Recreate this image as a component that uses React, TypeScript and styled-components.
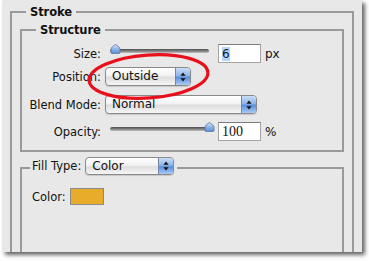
import styled, { createGlobalStyle } from 'styled-components';

const GlobalStyle = createGlobalStyle`
  body {
    margin: 0;
    background: #ffffff;
    font-family: 'DejaVu Sans', 'Liberation Sans', sans-serif;
    color: #111;
  }
`;

const Stage = styled.div`
  position: relative;
  width: 369px;
  height: 261px;
  overflow: hidden;
`;

const Panel = styled.div`
  width: 360px;
  height: 252px;
  margin-left: 2px;
  padding-top: 4px;
  box-sizing: border-box;
  background: #e8e8e8;
  box-shadow: 3px 3px 4px rgba(0, 0, 0, 0.6);
  overflow: hidden;
`;

const Group = styled.fieldset<{ $open?: boolean; $top?: number; $minHeight?: number; $bottom?: number }>`
  margin: ${(p) => p.$top ?? 0}px 8px 0 8px;
  padding: 0 0 ${(p) => p.$bottom ?? 0}px 0;
  min-width: 0;
  min-height: ${(p) => p.$minHeight ?? 0}px;
  border: 2px solid #9a9a9a;
  border-bottom: ${(p) => (p.$open ? 'none' : '2px solid #9a9a9a')};
`;

const Legend = styled.legend<{ $indent: number; $pad?: number }>`
  margin-left: ${(p) => p.$indent}px;
  padding: 0 ${(p) => p.$pad ?? 4}px;
  font-weight: bold;
  font-size: 11.5px;
  letter-spacing: -0.1px;
  line-height: 16px;
  color: #111;
`;

const FillLegend = styled.legend`
  margin-left: 8px;
  padding: 0 3px 3px 2px;
  display: flex;
  align-items: center;
  gap: 4px;
`;

const Row = styled.div<{ $gap: number }>`
  display: grid;
  grid-template-columns: 79px auto;
  column-gap: 4px;
  align-items: center;
  height: 19px;
  margin-top: ${(p) => p.$gap}px;
`;

const Label = styled.span<{ $align?: string }>`
  font-size: 11.5px;
  text-align: ${(p) => p.$align ?? 'right'};
  white-space: nowrap;
`;

const Controls = styled.div`
  display: flex;
  align-items: center;
`;

const SliderWrap = styled.div`
  position: relative;
  width: 104px;
  height: 19px;
  margin-left: 5px;
`;

const Track = styled.div`
  position: absolute;
  left: 0;
  top: 5px;
  width: 99px;
  height: 4px;
  border-radius: 2px;
  background: linear-gradient(#4e4e4e, #8a8a8a 60%, #c4c4c4);
`;

const Thumb = styled.svg`
  position: absolute;
  top: 0;
`;

const NumberBox = styled.div<{ $serif?: boolean }>`
  width: 43px;
  height: 19px;
  box-sizing: border-box;
  margin-left: 4px;
  padding: 1px 3px;
  background: #fff;
  border: 1px solid #a4a4a4;
  border-top-color: #7c7c7c;
  font-family: ${(p) => (p.$serif ? "'Liberation Serif', serif" : "'DejaVu Sans', sans-serif")};
  font-size: ${(p) => (p.$serif ? 14 : 12)}px;
  line-height: 16px;
`;

const Selected = styled.span`
  background: #b5d5ff;
`;

const Unit = styled.span`
  margin-left: 4px;
  font-size: 12px;
`;

const Popup = styled.div<{ $width: number; $height?: number }>`
  display: flex;
  width: ${(p) => p.$width}px;
  height: ${(p) => p.$height ?? 19}px;
  box-sizing: border-box;
  border: 1px solid #8a8a8a;
  border-radius: 4px;
  overflow: hidden;
  background: linear-gradient(#ffffff, #f2f2f2 45%, #dedede 55%, #f6f6f6);
  box-shadow: 0 1px 1px rgba(0, 0, 0, 0.15);
`;

const PopupText = styled.span`
  flex: 1;
  padding-left: 6px;
  font-size: 12px;
  line-height: 17px;
  font-weight: normal;
  color: #111;
`;

const PopupCap = styled.div`
  width: 14px;
  display: flex;
  align-items: center;
  justify-content: center;
  border-left: 1px solid #6f86a8;
  background: linear-gradient(#c9ddf6, #8fb5ea 45%, #5b8fdc 55%, #a9cbf5);
`;

const ColorRow = styled.div`
  display: flex;
  align-items: center;
  gap: 4px;
  margin: 10px 0 0 10px;
`;

const Swatch = styled.div<{ $color: string }>`
  width: 34px;
  height: 17px;
  box-sizing: border-box;
  border: 1px solid #8a8a8a;
  background: ${(p) => p.$color};
`;

const Marker = styled.svg`
  position: absolute;
  left: 0;
  top: 0;
  pointer-events: none;
`;

const Slider = ({ value }: { value: number }) => (
  <SliderWrap>
    <Track />
    <Thumb
      width="11"
      height="10"
      viewBox="0 0 11 10"
      style={{ left: `${(value / 100) * 94}px` }}
    >
      <defs>
        <linearGradient id={`thumb${value}`} x1="0" y1="0" x2="0" y2="1">
          <stop offset="0" stopColor="#dbe9fa" />
          <stop offset="0.5" stopColor="#8db5e8" />
          <stop offset="1" stopColor="#5d8fd6" />
        </linearGradient>
      </defs>
      <path
        d="M5.5 0.6 C7.5 1.6 10 3.6 10 5.2 V8.6 Q10 9.4 9.2 9.4 H1.8 Q1 9.4 1 8.6 V5.2 C1 3.6 3.5 1.6 5.5 0.6 Z"
        fill={`url(#thumb${value})`}
        stroke="#55749f"
        strokeWidth="0.8"
      />
    </Thumb>
  </SliderWrap>
);

const Select = ({ value, width, height }: { value: string; width: number; height?: number }) => (
  <Popup $width={width} $height={height}>
    <PopupText>{value}</PopupText>
    <PopupCap>
      <svg width="6" height="10" viewBox="0 0 6 10">
        <path d="M3 0.5 L5.6 3.8 H0.4 Z" fill="#111" />
        <path d="M3 9.5 L5.6 6.2 H0.4 Z" fill="#111" />
      </svg>
    </PopupCap>
  </Popup>
);

export default function App() {
  return (
    <Stage>
      <GlobalStyle />
      <Panel>
        <Group $open $minHeight={260}>
          <Legend $indent={14}>Stroke</Legend>
          <Group $top={2} $bottom={9}>
            <Legend $indent={14}>Structure</Legend>
            <Row $gap={6}>
              <Label>Size:</Label>
              <Controls>
                <Slider value={0} />
                <NumberBox>
                  <Selected>6</Selected>
                </NumberBox>
                <Unit>px</Unit>
              </Controls>
            </Row>
            <Row $gap={4}>
              <Label>Position:</Label>
              <Controls>
                <Select value="Outside" width={86} />
              </Controls>
            </Row>
            <Row $gap={9}>
              <Label>Blend Mode:</Label>
              <Controls>
                <Select value="Normal" width={152} />
              </Controls>
            </Row>
            <Row $gap={8}>
              <Label>Opacity:</Label>
              <Controls>
                <Slider value={100} />
                <NumberBox $serif>100</NumberBox>
                <Unit>%</Unit>
              </Controls>
            </Row>
          </Group>
          <Group $open $top={5} $minHeight={140}>
            <FillLegend>
              <Label>Fill Type:</Label>
              <Select value="Color" width={89} height={18} />
            </FillLegend>
            <ColorRow>
              <Label>Color:</Label>
              <Swatch $color="#e7ad2a" />
            </ColorRow>
          </Group>
        </Group>
      </Panel>
      <Marker width="369" height="261" viewBox="0 0 369 261">
        <ellipse
          cx="148.5"
          cy="76.5"
          rx="59.5"
          ry="21.5"
          transform="rotate(-4 148.5 76.5)"
          fill="none"
          stroke="#e8101a"
          strokeWidth="3.2"
        />
      </Marker>
    </Stage>
  );
}
